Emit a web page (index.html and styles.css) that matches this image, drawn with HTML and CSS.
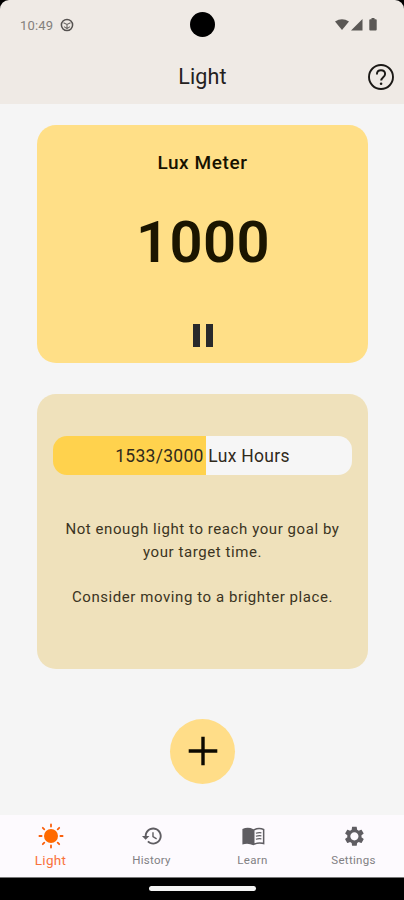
FILE: index.html
```html
<!DOCTYPE html>
<html lang="en">
<head>
<meta charset="utf-8">
<title>Light</title>
<link rel="stylesheet" href="styles.css">
</head>
<body>
<div class="phone">
  <header class="header">
    <div class="status">
      <span class="time">10:49</span>
      <svg class="status-app" viewBox="0 0 14 14"><circle cx="7" cy="7" r="5.6" fill="none" stroke="#555250" stroke-width="1.5"/><path d="M3.5 4.8L7 6.4l3.5-1.6M7 6.4v4M4 8.6l3 2 3-2" fill="none" stroke="#6a6764" stroke-width="1.1"/></svg>
      <span class="camera"></span>
      <svg class="status-icons" viewBox="0 0 44 14"><path d="M0 3.6Q7 -1 14 3.6L7 12z"/><path d="M27.5 1v11.5H16z"/><path d="M36.5 1.2V0h3v1.2h1.3q.9 0 .9.9v9.5q0 .9-.9.9h-5.600q-.9 0-.9-.9V2.100q0-.9.9-.9z"/></svg>
    </div>
    <div class="titlebar">
      <h1>Light</h1>
      <svg class="help" viewBox="0 0 26 26"><circle cx="13" cy="13" r="12" fill="none" stroke="#1b1916" stroke-width="1.900"/><path d="M8.900 10.400c0-2.500 1.700-4.200 4.100-4.200s4.100 1.600 4.100 3.800c0 3-3.900 3.400-3.900 6.600" fill="none" stroke="#1b1916" stroke-width="1.900"/><circle cx="13.100" cy="19.700" r="1.300" fill="#1b1916"/></svg>
    </div>
  </header>
  <main>
    <section class="card meter">
      <h2>Lux Meter</h2>
      <div class="value">1000</div>
      <div class="pause"><i></i><i></i></div>
    </section>
    <section class="card goal">
      <div class="progress"><span>1533/3000 Lux Hours</span></div>
      <p>Not enough light to reach your goal by<br>your target time.</p>
      <p class="advice">Consider moving to a brighter place.</p>
    </section>
    <button class="add" aria-label="Add"><svg viewBox="0 0 30 30"><path d="M15 .7v28.600M.7 15h28.600" stroke="#0c0900" stroke-width="3.400"/></svg></button>
  </main>
  <nav>
    <a class="active"><svg viewBox="0 0 26 26"><circle cx="13" cy="13" r="7"/><path d="M13 1.400v2.200M13 22.400v2.200M1.400 13h2.200M22.400 13h2.200M4.800 4.800l1.500 1.500M19.700 19.700l1.500 1.500M4.800 21.200l1.500-1.500M19.700 6.300l1.500-1.500" stroke="#fa5f0c" stroke-width="1.800" stroke-linecap="round"/></svg><span>Light</span></a>
    <a><svg viewBox="0 0 26 26"><path transform="translate(2 1.800) scale(.94)" d="M13 3c-4.970 0-9 4.030-9 9H1l3.890 3.890.07.140L9 12H6c0-3.870 3.130-7 7-7s7 3.130 7 7-3.130 7-7 7c-1.930 0-3.680-.79-4.940-2.060l-1.420 1.420C8.270 19.990 10.510 21 13 21c4.970 0 9-4.030 9-9s-4.030-9-9-9zm-1 5v5l4.280 2.540.72-1.210-3.500-2.080V8H12z"/></svg><span>History</span></a>
    <a><svg viewBox="0 0 26 26"><path d="M2.400 6Q8 3.400 13.400 6.200 18.800 3.400 24.400 6v15.500q-5.500-2-11 .7-5.500-2.700-11-.7z"/><path d="M14.500 7.400q4.200-1.800 8.400-.5v12.700q-4.200-1-8.400.6z" fill="#fdfafe"/><path d="M15.900 10.300q2.700-1 5.500-.5M15.900 13.300q2.700-1 5.500-.5M15.900 16.300q2.700-1 5.500-.5" fill="none" stroke="#5f5d62" stroke-width="1.200"/></svg><span>Learn</span></a>
    <a><svg viewBox="0 0 26 26"><path transform="translate(2 1.900) scale(.95)" d="M19.430 12.980c.04-.32.07-.64.07-.98s-.03-.66-.07-.98l2.110-1.650c.19-.15.24-.42.12-.64l-2-3.460c-.12-.22-.39-.3-.61-.22l-2.490 1c-.52-.4-1.080-.73-1.690-.98l-.38-2.650C14.460 2.180 14.250 2 14 2h-4c-.25 0-.46.18-.49.420l-.38 2.650c-.61.25-1.170.59-1.690.98l-2.490-1c-.23-.09-.49 0-.61.220l-2 3.460c-.13.220-.07.490.12.640l2.110 1.650c-.04.320-.07.650-.07.980s.03.660.07.980l-2.110 1.650c-.19.150-.24.420-.12.640l2 3.460c.12.220.39.300.61.220l2.490-1c.52.400 1.080.730 1.690.980l.38 2.650c.03.240.24.420.49.420h4c.25 0 .46-.18.490-.42l.38-2.650c.61-.25 1.170-.59 1.690-.98l2.490 1c.23.090.49 0 .61-.22l2-3.460c.12-.22.07-.49-.12-.64l-2.110-1.650zM12 16.300c-2.370 0-4.300-1.930-4.300-4.300S9.630 7.700 12 7.700s4.300 1.930 4.300 4.300-1.930 4.300-4.300 4.300z"/></svg><span>Settings</span></a>
  </nav>
  <footer><i></i></footer>
</div>
</body>
</html>
```
FILE: styles.css
```css
* { box-sizing: border-box; }
body { margin: 0; background: #000; font-family: Roboto, sans-serif; }
svg { display: block; }
h1, h2, p { margin: 0; font-weight: 400; }
.phone { width: 404px; height: 900px; display: flex; flex-direction: column; background: linear-gradient(#000 20px, #f5f5f5 20px); }
.header { height: 104px; background: #efeae5; border-radius: 9px 9px 0 0; }
.status { height: 50px; display: grid; grid-template-columns: 40px 14px 1fr 44px; padding: 0 25px 0 20px; align-items: center; position: relative; }
.time { font-size: 13px; letter-spacing: .2px; color: #83807c; white-space: nowrap; }
.status-app { width: 14px; height: 14px; }
.camera { position: absolute; left: 190px; top: 12px; width: 25px; height: 25px; border-radius: 50%; background: #000; }
.status-icons { grid-column: 4; width: 44px; height: 14px; fill: #5b5855; }
.titlebar { height: 54px; display: grid; grid-template-columns: 1fr 26px; padding: 0 10px 0 37px; align-items: center; }
h1 { font-size: 21.5px; line-height: 28px; letter-spacing: .1px; text-align: center; color: #24211e; }
.help { width: 26px; height: 26px; }
main { flex: 0 0 711px; padding: 21px 36px 0 37px; display: flex; flex-direction: column; align-items: center; }
.card { width: 331px; border-radius: 19px; display: flex; flex-direction: column; align-items: center; text-align: center; }
.meter { height: 237.5px; background: #ffdf87; padding-top: 25px; }
h2 { font-size: 19px; font-weight: 500; line-height: 25px; letter-spacing: .6px; color: #171200; }
.value { margin-top: 32px; padding-left: 1px; font-size: 58px; font-weight: 600; line-height: 70px; letter-spacing: .4px; color: #1b1500; }
.pause { margin-top: 47px; display: flex; gap: 6px; }
.pause i { width: 7px; height: 23px; background: #29292b; }
.goal { height: 275px; margin-top: 31px; background: #efe1bb; padding-top: 42.5px; }
.progress { width: 299px; height: 39px; border-radius: 14px; background: linear-gradient(90deg, #ffd24d 153px, #f6f6f6 153px); display: flex; align-items: center; justify-content: center; margin-bottom: 43px; font-size: 17.5px; letter-spacing: .3px; color: #302a1b; }
.goal p { font-size: 15px; line-height: 23px; letter-spacing: .57px; color: #3b3422; white-space: nowrap; }
.goal .advice { margin-top: 22px; }
.add { width: 65px; height: 65px; margin-top: 50px; border: 0; border-radius: 50%; padding: 0; background: #ffdd88; display: grid; place-items: center; }
.add svg { width: 30px; height: 30px; }
nav { height: 62px; background: #fdfafe; display: grid; grid-template-columns: repeat(4, 1fr); }
nav a { display: flex; flex-direction: column; align-items: center; padding-top: 8px; font-size: 11.5px; letter-spacing: .3px; line-height: 16px; color: #818083; }
nav svg { width: 26px; height: 26px; fill: #5f5d62; }
nav span { margin-top: 3px; }
nav .active { color: #f9733c; font-size: 13.5px; }
nav .active svg { fill: #ff6a00; }
footer { height: 23px; background: #000; display: flex; justify-content: center; padding-top: 8px; border-top: 1px solid #777; }
footer i { width: 107px; height: 5px; border-radius: 3px; background: #f4f4f4; }
```
